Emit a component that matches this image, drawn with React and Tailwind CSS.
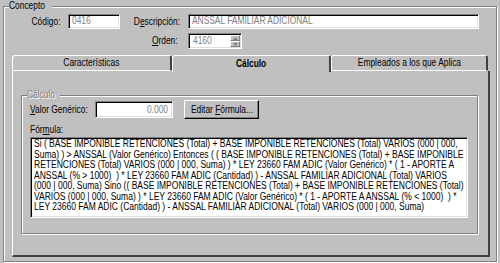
const FORMULA = [
  'Si ( BASE IMPONIBLE RETENCIONES (Total) + BASE IMPONIBLE RETENCIONES (Total) VARIOS (000 | 000,',
  'Suma) ) > ANSSAL (Valor Genérico) Entonces ( ( BASE IMPONIBLE RETENCIONES (Total) + BASE IMPONIBLE',
  'RETENCIONES (Total) VARIOS (000 | 000, Suma) ) * LEY 23660 FAM ADIC (Valor Genérico) * ( 1 - APORTE A',
  'ANSSAL (% > 1000)  ) * LEY 23660 FAM ADIC (Cantidad) ) - ANSSAL FAMILIAR ADICIONAL (Total) VARIOS',
  '(000 | 000, Suma) Sino (( BASE IMPONIBLE RETENCIONES (Total) + BASE IMPONIBLE RETENCIONES (Total)',
  'VARIOS (000 | 000, Suma) ) * LEY 23660 FAM ADIC (Valor Genérico) * ( 1 - APORTE A ANSSAL (% < 1000)  ) *',
  'LEY 23660 FAM ADIC (Cantidad) ) - ANSSAL FAMILIAR ADICIONAL (Total) VARIOS (000 | 000, Suma)',
];

// sunken text field look
const field =
  'bg-white border border-t-[#808080] border-l-[#808080] border-b-white border-r-white shadow-[inset_1px_1px_0_#000,inset_-1px_-1px_0_#dfdfdf] overflow-hidden';

// the dialog font is narrower than Arial, squeeze it a bit
const N = ({ children, o = 'origin-left' }) => (
  <span className={`inline-block whitespace-nowrap scale-x-[0.84] ${o}`}>{children}</span>
);

const GroupBox = ({ label, disabled, className, children }) => (
  <div className={`relative border border-[#808080] shadow-[inset_1px_1px_0_#fff,1px_1px_0_#fff] ${className}`}>
    <span
      className={`absolute -top-[7px] left-[5px] bg-[#c0c0c0] leading-[12px] ${
        disabled ? 'text-[#808080] [text-shadow:1px_1px_0_#fff]' : ''
      }`}
    >
      <N>{label}</N>
    </span>
    {children}
  </div>
);

const Tab = ({ label, active, className }) => (
  <div
    className={`flex items-center justify-center rounded-t-[3px] border-l border-t border-r-2 border-l-white border-t-white border-r-[#404040] ${
      active ? 'h-[17px] -mb-px z-10 bg-[#c0c0c0] font-bold' : 'h-[16px] border-b border-b-white'
    } ${className}`}
  >
    <N o="origin-center">{label}</N>
  </div>
);

export default function App() {
  return (
    <div className="w-[500px] h-[263px] overflow-hidden bg-[#c0c0c0] pt-[6px] pl-[3px] text-[10px] leading-[12px] text-black font-['Liberation_Sans',Arial,sans-serif]">
      <GroupBox label="Concepto" className="w-[494px] h-[256px]">
        {/* Código / Descripción */}
        <div className="flex items-center mt-[7px]">
          <div className="w-[56px] text-right">
            <N o="origin-right">Código:</N>
          </div>
          <div className={`ml-[8px] w-[52px] h-[15px] pl-[3px] text-[#808080] ${field}`}>
            <N>0416</N>
          </div>
          <div className="w-[60px] text-right">
            <N o="origin-right">
              D<span className="underline">e</span>scripción:
            </N>
          </div>
          <div className={`ml-[8px] w-[291px] h-[15px] pl-[3px] text-[#808080] ${field}`}>
            <N>ANSSAL FAMILIAR ADICIONAL</N>
          </div>
        </div>

        {/* Orden */}
        <div className="flex items-center mt-[4px]">
          <div className="w-[174px] text-right">
            <N o="origin-right">
              <span className="underline">O</span>rden:
            </N>
          </div>
          <div className={`ml-[10px] w-[54px] h-[16px] flex ${field}`}>
            <div className="flex-1 pl-[4px] pt-[1px] text-[#808080]">
              <N>4160</N>
            </div>
            <div className="w-[10px] flex flex-col py-px mr-px">
              <div className="flex-1 flex items-center justify-center bg-[#c0c0c0] border border-t-white border-l-white border-b-[#808080] border-r-[#808080]">
                <svg width="5" height="3" viewBox="0 0 5 3"><path d="M2.5 0 L5 3 L0 3 Z" fill="#808080" /></svg>
              </div>
              <div className="flex-1 flex items-center justify-center bg-[#c0c0c0] border border-t-white border-l-white border-b-[#808080] border-r-[#808080]">
                <svg width="5" height="3" viewBox="0 0 5 3"><path d="M0 0 L5 0 L2.5 3 Z" fill="#808080" /></svg>
              </div>
            </div>
          </div>
        </div>

        {/* Tabs */}
        <div className="ml-[8px] mt-[6px] w-[478px]">
          <div className="flex items-end">
            <Tab label="Características" className="w-[160px]" />
            <Tab label="Cálculo" active className="w-[159px]" />
            <Tab label="Empleados a los que Aplica" className="w-[157px]" />
          </div>

          <div className="h-[186px] border-l border-l-white border-r-2 border-r-[#404040] border-b-2 border-b-[#404040] pt-[24px] pl-[8px]">
            <GroupBox label="Cálculo" disabled className="w-[457px] h-[139px]">
              <div className="flex items-center mt-[4px] ml-[8px]">
                <div className="w-[65px] whitespace-nowrap">
                  <N>
                    <span className="underline">V</span>alor Genérico:
                  </N>
                </div>
                <div className={`w-[78px] h-[17px] pr-[4px] pt-[2px] text-right text-[#808080] ${field}`}>
                  <N o="origin-right">0.000</N>
                </div>
                <button className="ml-[11px] w-[75px] h-[19px] flex items-center justify-center bg-[#c0c0c0] border border-t-white border-l-white border-b-black border-r-black shadow-[inset_-1px_-1px_0_#808080]">
                  <N o="origin-center">
                    Editar <span className="underline">F</span>órmula...
                  </N>
                </button>
              </div>
              <div className="ml-[8px] mt-[5px]">
                <N>
                  Fór<span className="underline">m</span>ula:
                </N>
              </div>
              <div className={`ml-[8px] mt-px w-[438px] h-[81px] pl-[3px] pt-px leading-[10.5px] ${field}`}>
                {FORMULA.map((line, i) => (
                  <div key={i} className="whitespace-pre origin-left scale-x-[0.85]">
                    {line}
                  </div>
                ))}
              </div>
            </GroupBox>
          </div>
        </div>
      </GroupBox>
    </div>
  );
}
